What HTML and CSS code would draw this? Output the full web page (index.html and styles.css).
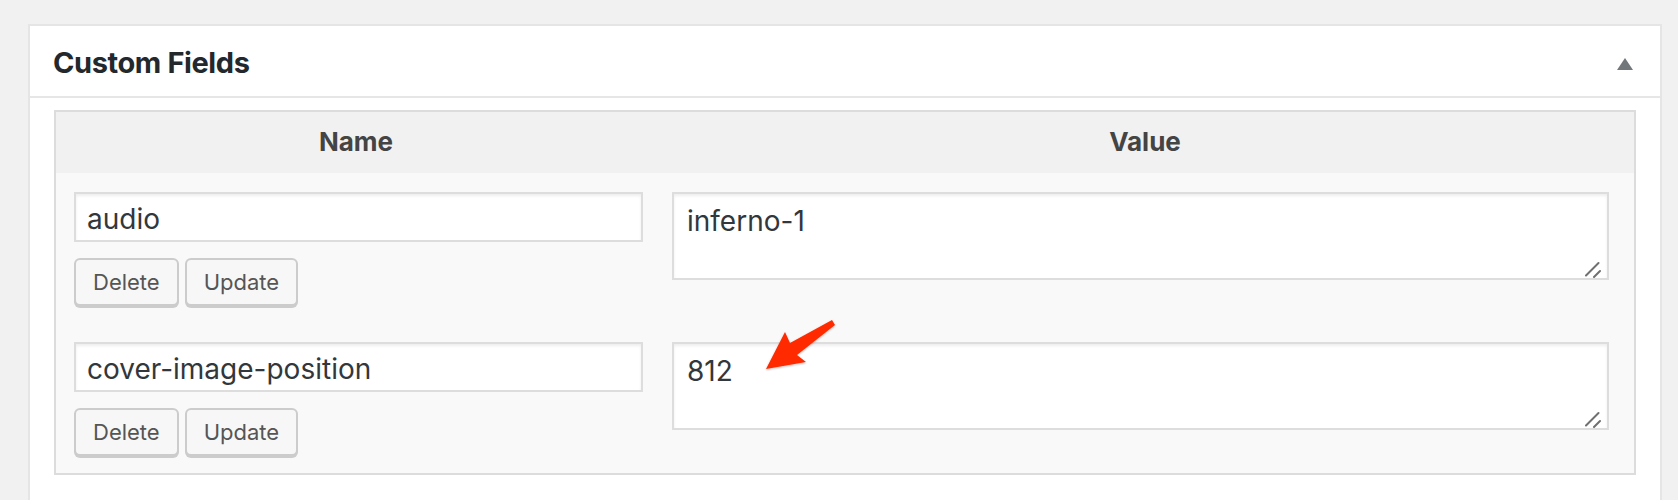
FILE: index.html
```html
<!DOCTYPE html>
<html>
<head>
<meta charset="utf-8">
<link rel="stylesheet" href="styles.css">
</head>
<body>
<div class="postbox">
  <div class="postbox-header">
    <h2 class="postbox-title">Custom Fields</h2>
    <svg class="toggle" width="16" height="12" viewBox="0 0 16 12"><polygon points="8,0 16,12 0,12" fill="#72777c"/></svg>
  </div>
  <div class="inside">
    <div class="list-table">
      <div class="thead">
        <div class="th">Name</div>
        <div class="th">Value</div>
      </div>
      <div class="row">
        <div class="cell-left">
          <input class="name-input" type="text" value="audio">
          <div class="buttons">
            <button class="btn">Delete</button>
            <button class="btn">Update</button>
          </div>
        </div>
        <div class="cell-right">
          <div class="ta-wrap">
            <textarea class="value-ta">inferno-1</textarea>
            <svg class="grip" width="20" height="20" viewBox="0 0 20 20"><path d="M1 16.5 L13.5 4 M9 18 L15 12" stroke="#707070" stroke-width="2" stroke-linecap="round" fill="none"/></svg>
          </div>
        </div>
      </div>
      <div class="row">
        <div class="cell-left">
          <input class="name-input" type="text" value="cover-image-position">
          <div class="buttons">
            <button class="btn">Delete</button>
            <button class="btn">Update</button>
          </div>
        </div>
        <div class="cell-right">
          <div class="ta-wrap">
            <textarea class="value-ta">812</textarea>
            <svg class="grip" width="20" height="20" viewBox="0 0 20 20"><path d="M1 16.5 L13.5 4 M9 18 L15 12" stroke="#707070" stroke-width="2" stroke-linecap="round" fill="none"/></svg>
          </div>
        </div>
      </div>
    </div>
  </div>
</div>
<svg class="arrow" width="90" height="70" viewBox="755 312 90 70">
  <defs>
    <filter id="sh" x="-20%" y="-20%" width="140%" height="140%">
      <feDropShadow dx="0" dy="1" stdDeviation="1" flood-color="#000" flood-opacity="0.25"/>
    </filter>
  </defs>
  <polygon filter="url(#sh)" fill="#ff2a00" points="766,369 785,332 790,343 832,320 835,325 797,355 806,362"/>
</svg>
</body>
</html>
```
FILE: styles.css
```css
* { box-sizing: border-box; }
html, body { margin: 0; padding: 0; }
body {
  background: #f1f1f1;
  font-family: Inter, "Noto Sans", sans-serif;
  color: #32373c;
  padding: 24px 16px 0 28px;
  height: 500px;
  overflow: hidden;
}
.postbox {
  background: #fff;
  border: 2px solid #e5e5e5;
  min-height: 600px;
}
.postbox-header {
  height: 72px;
  border-bottom: 2px solid #e6e6e6;
  display: flex;
  align-items: center;
  justify-content: space-between;
  padding: 2px 27px 0 23px;
}
.postbox-title {
  margin: 0;
  font-size: 29px;
  font-weight: 700;
  color: #23282d;
  letter-spacing: -0.4px;
}
.toggle { margin-top: 4px; }
.inside { padding: 12px 24px 0; }
.list-table {
  border: 2px solid #dcdcdc;
  background: #f9f9f9;
}
.thead {
  display: grid;
  grid-template-columns: 600px 1fr;
  background: #f1f1f1;
  height: 61px;
  align-items: center;
}
.th {
  text-align: center;
  font-weight: 700;
  font-size: 26px;
  color: #444;
  padding-bottom: 2px;
}
.row {
  display: grid;
  grid-template-columns: 600px 1fr;
}
.cell-left { padding: 19px 13px 17px 18px; }
.cell-right { padding: 19px 25px 17px 16px; }
.name-input {
  display: block;
  width: 100%;
  height: 50px;
  border: 2px solid #ddd;
  box-shadow: inset 0 2px 3px rgba(0,0,0,0.07);
  background: #fff;
  font-family: Inter, "Noto Sans", sans-serif;
  font-size: 28px;
  color: #32373c;
  padding: 3px 11px 0;
  margin: 0;
  outline: none;
}
.buttons {
  display: flex;
  gap: 6px;
  margin-top: 16px;
}
.btn {
  height: 48px;
  padding: 0 17px;
  border: 2px solid #ccc;
  border-radius: 6px;
  background: #f7f7f7;
  box-shadow: 0 2px 0 #ccc;
  font-family: Inter, "Noto Sans", sans-serif;
  font-size: 22px;
  color: #555;
  margin: 0;
}
.ta-wrap { position: relative; }
.value-ta {
  display: block;
  width: 100%;
  height: 88px;
  border: 2px solid #ddd;
  box-shadow: inset 0 2px 3px rgba(0,0,0,0.07);
  background: #fff;
  font-family: Inter, "Noto Sans", sans-serif;
  font-size: 28px;
  line-height: 38px;
  color: #32373c;
  padding: 8px 13px;
  margin: 0;
  resize: none;
  outline: none;
  overflow: hidden;
}
.grip {
  position: absolute;
  right: 4px;
  bottom: 1px;
}
.arrow {
  position: absolute;
  left: 755px;
  top: 312px;
}
```
